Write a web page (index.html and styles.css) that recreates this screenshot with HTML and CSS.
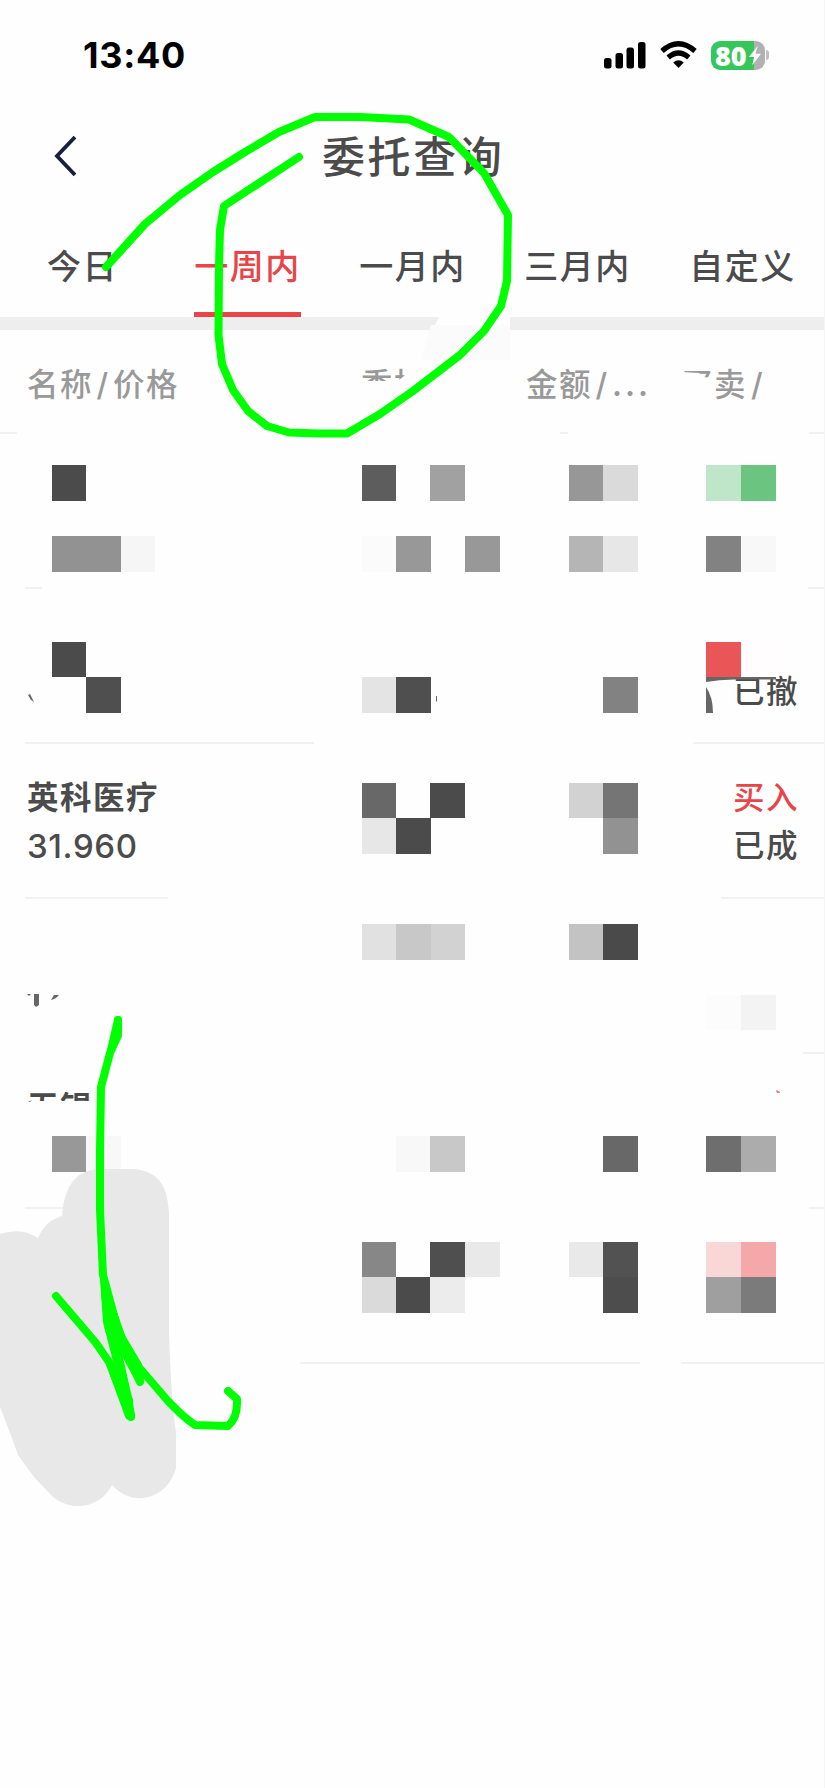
FILE: index.html
```html
<!DOCTYPE html>
<html lang="zh-CN">
<head>
<meta charset="utf-8">
<title>委托查询</title>
<link rel="stylesheet" href="styles.css">
</head>
<body>
<main class="screen">
  <header class="status">
    <span class="clock">13:40</span>
    <div class="status-icons">
      <svg class="signal" width="42" height="28" viewBox="0 0 42 28"><rect x="0" y="17" width="7.500" height="10.500" rx="2.5"/><rect x="11.500" y="12" width="7.500" height="15.500" rx="2.5"/><rect x="22.500" y="6.500" width="7.500" height="21" rx="2.5"/><rect x="34" y="1" width="7.500" height="26.500" rx="2.5"/></svg>
      <svg class="wifi" width="37" height="28" viewBox="0 0 37 28"><g fill="none" stroke="#000" stroke-width="5.2"><path d="M2 10Q18.500-4.500 35 10"/><path d="M8.200 16.500Q18.500 7.500 28.800 16.500"/></g><path d="M18.500 27l-5.300-5.600q5.300-4.300 10.600 0z"/></svg>
      <div class="battery">
        <div class="battery-body"><span>80</span><svg width="12" height="21" viewBox="0 0 13 21"><path d="M9.500 0L0 12h5.500L3.500 21 13 8.500H7z" fill="#fff"/></svg></div>
        <i class="battery-cap"></i>
      </div>
    </div>
  </header>
  <div class="titlebar">
    <svg class="back" width="22" height="42" viewBox="0 0 22 42"><path d="M21 2L3 21l18 19" fill="none" stroke="#17203f" stroke-width="3.800"/></svg>
    <h1>委托查询</h1>
  </div>
  <nav class="tabs">
    <a>今日</a><a class="active">一周内</a><a>一月内</a><a>三月内</a><a>自定义</a>
  </nav>
  <div class="band"></div>
  <section class="orders">
    <div class="row head">
      <span>名称<i class="slash">/</i>价格</span><span class="cut-entrust">委托</span><span>金额<i class="slash">/</i><b class="dots">...</b></span><span class="side-head"><i class="cut-buy">买</i><i class="cut-sell">卖</i><i class="cut-slash">/</i></span>
    </div>
    <div class="rule"><i style="width:17px"></i><i style="width:8px;margin-left:543px"></i><i class="end" style="width:15px"></i></div>
    <div class="row"></div>
    <div class="rule inset"><i style="width:17px"></i><i class="end" style="width:16px"></i></div>
    <div class="row"><span></span><span></span><span></span><span class="side"><em class="cancelled">已撤</em></span></div>
    <div class="rule inset"><i style="width:289px"></i><i class="end" style="width:131px"></i></div>
    <div class="row"><span class="stock"><strong>英科医疗</strong><em>31.960</em></span><span></span><span></span><span class="side"><em class="buy">买入</em><em>已成</em></span></div>
    <div class="rule inset"><i style="width:143px"></i><i class="end" style="width:103px"></i></div>
    <div class="row"></div>
    <div class="rule"><i class="end" style="width:21px"></i></div>
    <div class="row"><span class="stock"><strong class="cut-stock">无锡</strong></span></div>
    <div class="rule inset"><i style="width:45px"></i><i class="end" style="width:15px"></i></div>
    <div class="row"></div>
    <div class="rule"><i style="width:340px;margin-left:300px"></i><i class="end" style="width:143px"></i></div>
  </section>

  <svg class="markup" width="825" height="1788" viewBox="0 0 825 1788">
    <!-- erased patches -->
    <path d="M440 315h70v16h-78z" fill="#fefefe"/>
    <path d="M431 325h79v35h-89z" fill="#fbfbfb"/>
    <!-- mosaic cells -->
    <g shape-rendering="crispEdges">
      <path fill="#4b4b4b" d="M52 465h34v36H52zM52 642h34v35H52zM430 783h35v35h-35zM396 818h35v36h-35zM396 1277h35v36h-35z"/>
      <path fill="#4f4f4f" d="M86 677h35v36H86zM396 677h35v36h-35zM430 1242h35v35h-35z"/>
      <path fill="#5d5d5d" d="M362 465h34v36h-34z"/>
      <path fill="#a1a1a1" d="M430 465h35v36h-35z"/>
      <path fill="#979797" d="M569 465h34v36h-34z"/>
      <path fill="#dadada" d="M603 465h35v36h-35zM362 1277h34v36h-34z"/>
      <path fill="#bfe6c8" d="M706 465h35v36h-35z"/>
      <path fill="#6bc480" d="M741 465h35v36h-35z"/>
      <path fill="#929292" d="M52 536h69v36H52zM603 818h35v36h-35z"/>
      <path fill="#f6f6f6" d="M121 536h34v36h-34z"/>
      <path fill="#fbfbfb" d="M362 536h34v36h-34z"/>
      <path fill="#989898" d="M396 536h35v36h-35zM465 536h35v36h-35zM52 1136h34v36H52z"/>
      <path fill="#b5b5b5" d="M569 536h34v36h-34z"/>
      <path fill="#e7e7e7" d="M603 536h35v36h-35zM362 818h34v36h-34z"/>
      <path fill="#828282" d="M706 536h35v36h-35zM603 677h35v36h-35z"/>
      <path fill="#f8f8f8" d="M741 536h35v36h-35zM86 1136h35v36H86zM396 1136h35v36h-35z"/>
      <path fill="#ea5557" d="M706 642h35v35h-35z"/>
      <path fill="#fffdfd" d="M741 642h35v35h-35z"/>
      <path fill="#e4e4e4" d="M362 677h34v36h-34z"/>
      <path fill="#686868" d="M362 783h34v35h-34zM603 1136h35v36h-35z"/>
      <path fill="#d2d2d2" d="M569 783h34v35h-34zM430 924h35v36h-35z"/>
      <path fill="#757575" d="M603 783h35v35h-35z"/>
      <path fill="#e1e1e1" d="M362 924h34v36h-34z"/>
      <path fill="#c8c8c8" d="M396 924h35v36h-35zM430 1136h35v36h-35z"/>
      <path fill="#c3c3c3" d="M569 924h34v36h-34z"/>
      <path fill="#4a4a4a" d="M603 924h35v36h-35z"/>
      <path fill="#fcfcfc" d="M706 995h35v35h-35z"/>
      <path fill="#f3f3f3" d="M741 995h35v35h-35z"/>
      <path fill="#6e6e6e" d="M706 1136h35v36h-35z"/>
      <path fill="#acacac" d="M741 1136h35v36h-35z"/>
      <path fill="#878787" d="M362 1242h34v35h-34z"/>
      <path fill="#e9e9e9" d="M465 1242h35v35h-35zM569 1242h34v35h-34z"/>
      <path fill="#ececec" d="M430 1277h35v36h-35z"/>
      <path fill="#525252" d="M603 1242h35v35h-35z"/>
      <path fill="#4d4d4d" d="M603 1277h35v36h-35z"/>
      <path fill="#f9d7d7" d="M706 1242h35v35h-35z"/>
      <path fill="#f4a8aa" d="M741 1242h35v35h-35z"/>
      <path fill="#9f9f9f" d="M706 1277h35v36h-35z"/>
      <path fill="#7b7b7b" d="M741 1277h35v36h-35z"/>
    </g>
    <!-- leftover stroke fragments -->
    <g fill="#666">
      <path d="M706 677h70v2.500h-42q-15 0-28 2.500zM706 687q7 10 7 26h-7z"/>
      <path d="M28 695l2-1 4 8-3-2zM436 696h1v5l-1 1zM34 994h5v11l-3 2-2-2zM27 994h4l-2 2zM51 1000l3-5h5q-3 4-8 5zM28 1102l4-2-2 2z"/>
      <path fill="#f08085" d="M776 1091l1-1 3 2v1h-3z"/>
    </g>
    <!-- grey marker -->
    <path fill="#e8e8e8" d="M0 1234Q22 1227 38 1238Q46 1220 62 1216Q65 1170 99 1169H135Q165 1172 168 1204L169 1212V1330Q171 1400 176 1433V1468C167 1500 132 1508 112 1485C101 1508 71 1513 52 1496L34 1477 18 1455 12 1438 0 1407z"/>
    <!-- green pen -->
    <g class="pen">
      <path d="M106 267L145 224 180 195 213 172 245 152 279 132 315 117H360L409 119.500 449 137 484 173 508 215 507 281 501 306 484 331 460 355 413 391 380 414 347 433.500H318L289 432.500 267 426 248 411 233 390 222 364 218.500 335 219 265 220 230 224 206 299 157"/>
      <path d="M118 1020V1035L110 1053 101 1087 100 1150V1210L103 1275 118 1330 140 1382 137 1365 168 1401Q183 1417 195 1425L228 1426Q238 1418 237 1399L228 1391M104 1280L107 1322 131 1415 128 1398 106 1300 122 1338 138 1365M56 1296L96 1343 109 1362 131 1417"/>
      <path fill="#0f0" d="M105 1290L119 1330 127 1354 140 1381 118 1340 109 1330zM118 1020V1035L111 1050zM113 1372L129 1400V1416z"/>
    </g>
  </svg>
</main>
</body>
</html>
```
FILE: styles.css
```css
* { box-sizing: border-box; }
body {
  margin: 0;
  background: #fefefe;
  color: #4b4b4b;
  font-family: Inter, "Noto Sans CJK SC", sans-serif;
}
i, em { font-style: normal; }
svg { display: block; }
.screen {
  position: relative;
  width: 825px;
  height: 1788px;
  overflow: hidden;
  border-right: 1px solid #f5f5f5;
}
.status {
  display: flex;
  justify-content: space-between;
  align-items: center;
  height: 110px;
  padding: 0 55px 0 83px;
  color: #000;
}
.clock { font-size: 36px; font-weight: 700; letter-spacing: .7px; }
.status-icons { display: flex; align-items: center; }
.wifi { margin: 0 14px 0 14px; }
.battery { display: flex; align-items: center; }
.battery-body {
  display: flex;
  align-items: center;
  width: 54px;
  height: 29px;
  padding-left: 4px;
  border-radius: 9px;
  background: linear-gradient(90deg, #35c759 43px, #b1b1b1 43px);
  color: #fff;
  font-family: "Open Sans", sans-serif;
  font-size: 27px;
  font-weight: 800;
  letter-spacing: 0;
}
.battery-body span { width: 34px; }
.battery-cap { width: 3px; height: 10px; margin-left: 1px; border-radius: 0 3px 3px 0; background: #c0c0c0; }
.titlebar {
  display: flex;
  align-items: center;
  height: 92px;
  padding-left: 54px;
}
h1 {
  margin: 2px 0 0 246px;
  font-size: 43px;
  font-weight: 500;
  line-height: 60px;
  letter-spacing: 2.600px;
}
.tabs { display: grid; grid-template-columns: repeat(5, 165px); height: 115px; }
.tabs a {
  justify-self: center;
  height: 115px;
  padding-top: 40px;
  font-size: 34px;
  font-weight: 500;
  line-height: 50px;
  letter-spacing: 1.500px;
  white-space: nowrap;
}
.tabs .active { color: #e84548; border-bottom: 5px solid #e84548; }
.band { height: 13px; background: #eee; }
.row {
  display: grid;
  grid-template-columns: 334px 165px 155px 1fr;
  height: 153px;
  padding-left: 27px;
  font-size: 31.500px;
  letter-spacing: 1.500px;
  line-height: 48px;
}
.head { height: 102px; padding-top: 31px; color: #999; font-weight: 500; }
.head span { white-space: nowrap; }
.slash { display: inline-block; width: 20px; text-align: center; }
.dots { font-weight: 600; letter-spacing: 3px; }
.cut-entrust { clip-path: polygon(0 0, 54px 0, 43px 15px, 38px 19px, 27px 20px, 0 20px); }
.side-head { display: flex; }
.cut-buy { clip-path: polygon(0 0, 100% 0, 100% 17px, 22px 16px, 18px 12px, 0 11px); }
.cut-slash { margin-left: 4px; clip-path: inset(0 0 11px 0); }
.rule { display: flex; height: 2px; }
.rule i { background: #f1f1f1; }
.inset { padding-left: 25px; }
.rule .end { margin-left: auto; }
.stock, .side { display: flex; flex-direction: column; padding-top: 30px; white-space: nowrap; }
.stock strong { font-weight: 700; }
.stock em { font-size: 33px; font-weight: 500; letter-spacing: .6px; }
.side { padding-left: 52px; font-weight: 500; }
.side .buy { color: #e84548; }
.side .cancelled { margin-top: 49px; }
.cut-stock { width: 70px; clip-path: inset(0 0 31px 0); }
.markup { position: absolute; left: 0; top: 0; }
.pen { fill: none; stroke: #0f0; stroke-width: 8px; stroke-linecap: round; stroke-linejoin: round; }
```
